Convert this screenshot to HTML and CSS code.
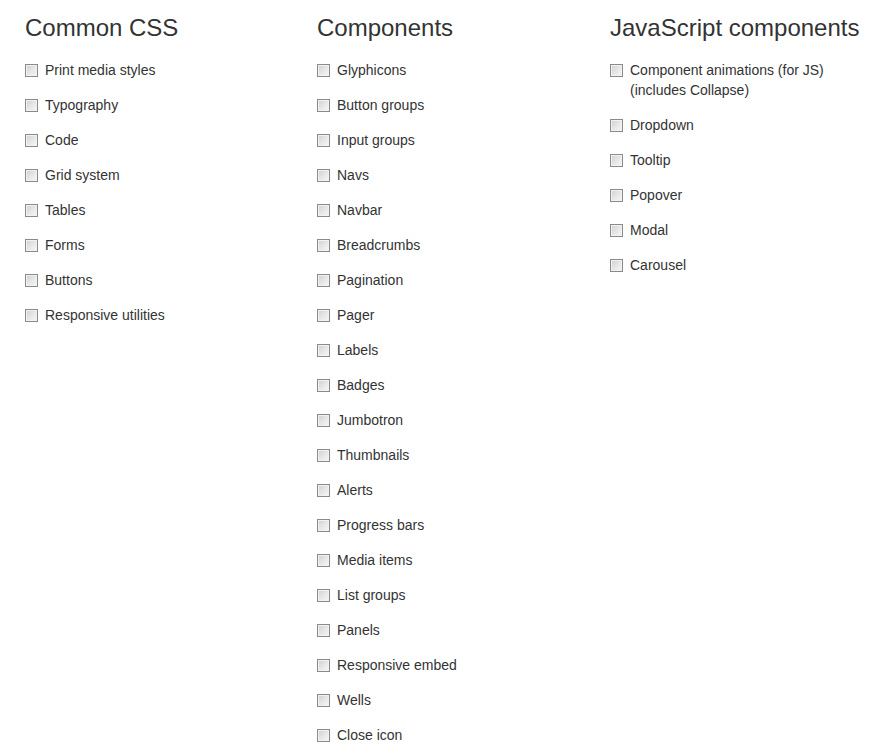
FILE: index.html
```html
<!DOCTYPE html>
<html>
<head>
<meta charset="utf-8">
<link rel="stylesheet" href="styles.css">
</head>
<body>
<div class="row">
  <div class="col">
    <h3>Common CSS</h3>
    <div class="list">
      <label class="item"><span class="box"></span><span>Print media styles</span></label>
      <label class="item"><span class="box"></span><span>Typography</span></label>
      <label class="item"><span class="box"></span><span>Code</span></label>
      <label class="item"><span class="box"></span><span>Grid system</span></label>
      <label class="item"><span class="box"></span><span>Tables</span></label>
      <label class="item"><span class="box"></span><span>Forms</span></label>
      <label class="item"><span class="box"></span><span>Buttons</span></label>
      <label class="item"><span class="box"></span><span>Responsive utilities</span></label>
    </div>
  </div>
  <div class="col">
    <h3>Components</h3>
    <div class="list">
      <label class="item"><span class="box"></span><span>Glyphicons</span></label>
      <label class="item"><span class="box"></span><span>Button groups</span></label>
      <label class="item"><span class="box"></span><span>Input groups</span></label>
      <label class="item"><span class="box"></span><span>Navs</span></label>
      <label class="item"><span class="box"></span><span>Navbar</span></label>
      <label class="item"><span class="box"></span><span>Breadcrumbs</span></label>
      <label class="item"><span class="box"></span><span>Pagination</span></label>
      <label class="item"><span class="box"></span><span>Pager</span></label>
      <label class="item"><span class="box"></span><span>Labels</span></label>
      <label class="item"><span class="box"></span><span>Badges</span></label>
      <label class="item"><span class="box"></span><span>Jumbotron</span></label>
      <label class="item"><span class="box"></span><span>Thumbnails</span></label>
      <label class="item"><span class="box"></span><span>Alerts</span></label>
      <label class="item"><span class="box"></span><span>Progress bars</span></label>
      <label class="item"><span class="box"></span><span>Media items</span></label>
      <label class="item"><span class="box"></span><span>List groups</span></label>
      <label class="item"><span class="box"></span><span>Panels</span></label>
      <label class="item"><span class="box"></span><span>Responsive embed</span></label>
      <label class="item"><span class="box"></span><span>Wells</span></label>
      <label class="item"><span class="box"></span><span>Close icon</span></label>
    </div>
  </div>
  <div class="col">
    <h3>JavaScript components</h3>
    <div class="list">
      <label class="item"><span class="box"></span><span>Component animations (for JS)<br>(includes Collapse)</span></label>
      <label class="item"><span class="box"></span><span>Dropdown</span></label>
      <label class="item"><span class="box"></span><span>Tooltip</span></label>
      <label class="item"><span class="box"></span><span>Popover</span></label>
      <label class="item"><span class="box"></span><span>Modal</span></label>
      <label class="item"><span class="box"></span><span>Carousel</span></label>
    </div>
  </div>
</div>
</body>
</html>
```
FILE: styles.css
```css
html, body {
  margin: 0;
  padding: 0;
  background: #fff;
}
body {
  font-family: "Liberation Sans", Arial, Helvetica, sans-serif;
  font-size: 14px;
  line-height: 20px;
  color: #333;
  padding-top: 15px;
}
.row {
  display: grid;
  grid-template-columns: 292px 293px 292px;
  padding-left: 10px;
}
.col {
  padding-left: 15px;
}
h3 {
  margin: 0 0 19px 0;
  font-size: 24px;
  font-weight: 500;
  line-height: 26.4px;
  color: #333;
}
.list {
  display: flex;
  flex-direction: column;
  gap: 15px;
}
.item {
  display: flex;
  align-items: flex-start;
  gap: 7px;
}
.box {
  flex: none;
  width: 11px;
  height: 11px;
  margin-top: 4px;
  border: 1px solid #8a8a8a;
  background: linear-gradient(135deg, #cfcfcf 0%, #e8e8e8 55%, #f6f6f6 100%);
  box-shadow: inset 0 0 0 1px #f2f2f2;
}
```
